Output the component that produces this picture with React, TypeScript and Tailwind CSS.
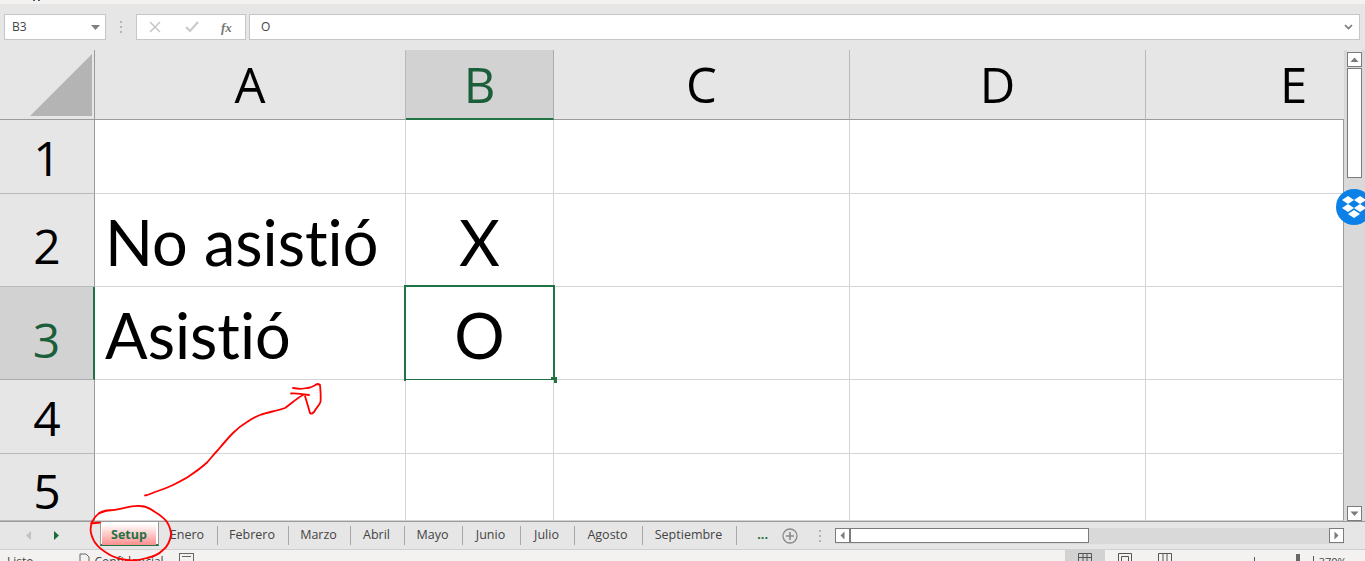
import React from "react";

const ui = "font-['Open_Sans','Liberation_Sans',sans-serif]";
const cellText = "font-['Lato','Liberation_Sans',sans-serif] text-[63px] leading-none text-black [font-variant-ligatures:none] bg-white pt-[2px]";

const columns = [
  { label: "A", w: "w-[311px]" },
  { label: "B", w: "w-[148px]", active: true },
  { label: "C", w: "w-[296px]" },
  { label: "D", w: "w-[296px]" },
  { label: "E", w: "w-[296px]" },
];

const rows = [
  { label: "1", h: "h-[74px]", pt: "pt-[2px]", a: "", b: "" },
  { label: "2", h: "h-[93px]", pt: "pt-[11px]", a: "No asistió", b: "X" },
  { label: "3", h: "h-[93px]", pt: "pt-[13px]", a: "Asistió", b: "O", active: true },
  { label: "4", h: "h-[74px]", pt: "pt-[2px]", a: "", b: "" },
  { label: "5", h: "h-[67px]", pt: "pt-[8px]", a: "", b: "" },
];

const tabs = [
  { t: "Enero", w: "w-[59px]" },
  { t: "Febrero", w: "w-[71px]" },
  { t: "Marzo", w: "w-[62px]" },
  { t: "Abril", w: "w-[54px]" },
  { t: "Mayo", w: "w-[58px]" },
  { t: "Junio", w: "w-[58px]" },
  { t: "Julio", w: "w-[54px]" },
  { t: "Agosto", w: "w-[68px]" },
  { t: "Septiembre", w: "w-[94px]" },
];

function Dots() {
  return (
    <div className="flex flex-col gap-[3px]">
      <span className="h-[2px] w-[2px] bg-[#b5b5b5]" />
      <span className="h-[2px] w-[2px] bg-[#b5b5b5]" />
      <span className="h-[2px] w-[2px] bg-[#b5b5b5]" />
    </div>
  );
}

function ScrollBtn({ points }: { points: string }) {
  return (
    <div className="flex h-[15px] w-[15px] shrink-0 items-center justify-center border border-[#7b7b7b] bg-white">
      <svg width="9" height="9" viewBox="0 0 9 9">
        <polygon points={points} fill="#7b7b7b" />
      </svg>
    </div>
  );
}

export default function App() {
  return (
    <div className={`relative flex h-[561px] w-[1365px] flex-col overflow-hidden bg-[#e6e6e6] ${ui}`}>
      {/* ribbon remnant */}
      <div className="flex h-[4px] shrink-0 items-start bg-[#f3f2f1] shadow-[0_1px_2px_rgba(0,0,0,0.25)]">
        <span className="ml-[33px] h-[1px] w-[2px] bg-[#555]" />
        <span className="ml-[3px] h-[1px] w-[2px] bg-[#555]" />
      </div>

      {/* formula bar */}
      <div className="flex h-[46px] shrink-0 items-start bg-[#e6e6e6] pl-[4px] pr-[5px] pt-[10px]">
        <div className="flex h-[26px] w-[102px] items-center justify-between border border-[#c6c6c6] bg-white pl-[7px] pr-[5px] text-[12px] text-[#444]">
          <span>B3</span>
          <svg width="9" height="5" viewBox="0 0 9 5">
            <polygon points="0,0 9,0 4.5,5" fill="#808080" />
          </svg>
        </div>
        <div className="flex h-[26px] w-[30px] items-center justify-center">
          <Dots />
        </div>
        <div className="flex h-[26px] w-[110px] items-center border border-[#c6c6c6] bg-white">
          <svg className="ml-[12px]" width="12" height="12" viewBox="0 0 12 12">
            <path d="M1 1 L11 11 M11 1 L1 11" stroke="#c8c8c8" strokeWidth="1.6" fill="none" />
          </svg>
          <svg className="ml-[24px]" width="14" height="12" viewBox="0 0 14 12">
            <path d="M1 6 L5 10 L13 1" stroke="#c8c8c8" strokeWidth="2" fill="none" />
          </svg>
          <span className="ml-[22px] font-['Liberation_Serif',serif] text-[13px] font-bold italic leading-none text-[#777]">fx</span>
        </div>
        <div className="ml-[3px] flex h-[26px] flex-1 items-center justify-between border border-[#c6c6c6] bg-white pl-[11px] pr-[6px] text-[12px] text-[#444]">
          <span>O</span>
          <svg width="9" height="6" viewBox="0 0 9 6">
            <path d="M1 1 L4.5 4.5 L8 1" stroke="#777" strokeWidth="1.6" fill="none" />
          </svg>
        </div>
      </div>

      {/* sheet + vertical scrollbar */}
      <div className="flex h-[471px] shrink-0">
        <div className="w-[1344px] shrink-0 overflow-hidden">
          {/* column header */}
          <div className="flex h-[70px]">
            <div className="flex w-[95px] shrink-0 items-end justify-end border-b border-r border-[#9b9b9b] pb-[3px] pr-[2px]">
              <svg width="62" height="62" viewBox="0 0 62 62">
                <polygon points="62,0 62,62 0,62" fill="#b4b4b4" />
              </svg>
            </div>
            {columns.map((c) => (
              <div
                key={c.label}
                className={`flex shrink-0 items-center justify-center border-r text-[49px] font-normal leading-none ${c.w} ${
                  c.active
                    ? "border-b-2 border-b-[#217346] border-r-[#ababab] bg-[#d2d2d2] text-[#1b5e3a]"
                    : "border-b border-b-[#9b9b9b] border-r-[#b9b9b9] text-black"
                }`}
              >
                {c.label}
              </div>
            ))}
          </div>
          {/* rows */}
          {rows.map((r) => (
            <div key={r.label} className={`flex ${r.h}`}>
              <div
                className={`flex w-[95px] shrink-0 items-center justify-center border-b text-[48px] leading-none ${r.pt} ${
                  r.active
                    ? "border-r-2 border-b-[#ababab] border-r-[#217346] bg-[#d2d2d2] text-[#1b5e3a]"
                    : "border-r border-b-[#b9b9b9] border-r-[#9b9b9b] text-black"
                }`}
              >
                {r.label}
              </div>
              <div className={`flex w-[311px] shrink-0 items-center border-b border-r border-[#d4d4d4] pl-[10px] ${cellText}`}>
                {r.a}
              </div>
              <div
                className={`relative flex w-[148px] shrink-0 items-center justify-center border-b border-r border-[#d4d4d4] ${cellText}`}
              >
                {r.b}
                {r.active && (
                  <div className="absolute left-[-2px] top-[-2px] h-[96px] w-[151px] border-2 border-[#217346]">
                    <span className="absolute bottom-[-4px] right-[-4px] h-[6px] w-[6px] bg-[#217346]" />
                  </div>
                )}
              </div>
              <div className="w-[296px] shrink-0 border-b border-r border-[#d4d4d4] bg-white" />
              <div className="w-[296px] shrink-0 border-b border-r border-[#d4d4d4] bg-white" />
              <div className="w-[198px] shrink-0 border-b border-r border-b-[#d4d4d4] border-r-[#9b9b9b] bg-white" />
            </div>
          ))}
        </div>
        <div className="flex w-[21px] shrink-0 flex-col items-center bg-[#d9d9d9] pl-[3px] pr-[3px]">
          <div className="h-[2px] w-full shrink-0 bg-[#e6e6e6]" />
          <ScrollBtn points="0.5,7 8.5,7 4.5,2.5" />
          <div className="mt-[1px] h-[110px] w-[15px] shrink-0 border border-[#7b7b7b] bg-white" />
          <div className="flex-1" />
          <ScrollBtn points="0.5,2.5 8.5,2.5 4.5,7" />
        </div>
      </div>

      {/* tab bar */}
      <div className="flex h-[28px] shrink-0 border-t border-[#9b9b9b] bg-[#e6e6e6] text-[12.5px] text-[#444]">
        <div className="flex w-[100px] shrink-0 items-center pl-[25px]">
          <svg width="7" height="9" viewBox="0 0 7 9">
            <polygon points="6,0 6,9 1,4.5" fill="#c2c2c2" />
          </svg>
          <svg className="ml-[21px]" width="7" height="9" viewBox="0 0 7 9">
            <polygon points="1,0 1,9 6,4.5" fill="#1b6b40" />
          </svg>
        </div>
        <div className="flex h-[24px] w-[59px] shrink-0 flex-col border-b-2 border-l border-r border-b-[#217346] border-l-[#9b9b9b] border-r-[#9b9b9b] bg-white pl-[1px] pr-[2px] pt-[2px]">
          <div className="flex flex-1 items-center justify-center bg-gradient-to-b from-white to-[#fa8f8f] pt-[2px] text-[12.5px] font-bold text-[#217346]">
            Setup
          </div>
        </div>
        {tabs.map((t) => (
          <div key={t.t} className={`flex shrink-0 items-center justify-center ${t.w}`}>
            <span className="flex h-[19px] w-full items-center justify-center border-r border-[#a8a8a8] pr-[2px] leading-none">{t.t}</span>
          </div>
        ))}
        <div className="flex w-[34px] shrink-0 items-center justify-end pr-[3px] font-bold text-[#1b6b40]">...</div>
        <div className="ml-[11px] flex shrink-0 items-center">
          <svg width="16" height="16" viewBox="0 0 16 16">
            <circle cx="8" cy="8" r="7" stroke="#8a8a8a" strokeWidth="1.3" fill="none" />
            <path d="M8 4 V12 M4 8 H12" stroke="#8a8a8a" strokeWidth="1.6" />
          </svg>
        </div>
        <div className="ml-[21px] flex shrink-0 items-center">
          <Dots />
        </div>
        <div className="ml-[14px] flex h-[16px] w-[509px] shrink-0 self-center bg-[#d9d9d9]">
          <ScrollBtn points="6.5,0.5 6.5,8.5 2.5,4.5" />
          <div className="h-[15px] w-[239px] shrink-0 border border-[#7b7b7b] bg-white" />
          <div className="flex-1" />
          <ScrollBtn points="2.5,0.5 2.5,8.5 6.5,4.5" />
        </div>
      </div>

      {/* status bar */}
      <div className="relative flex h-[12px] shrink-0 overflow-hidden border-t border-[#d0d0d0] bg-[#f3f2f1] text-[12px] text-[#444]">
        <span className="ml-[7px] mt-[6px] leading-none">Listo</span>
        <svg className="ml-[45px] mt-[3px]" width="11" height="13" viewBox="0 0 11 13">
          <path d="M1 1 H7 L10 4 V12 H1 Z" stroke="#666" fill="none" />
        </svg>
        <span className="ml-[5px] mt-[6px] leading-none">Confidencial</span>
        <svg className="ml-[15px] mt-[3px]" width="15" height="13" viewBox="0 0 15 13">
          <rect x="0.5" y="0.5" width="14" height="12" stroke="#666" fill="none" />
          <path d="M3 3.5 H12" stroke="#666" />
        </svg>
        <div className="ml-[871px] flex h-full w-[40px] justify-center bg-[#d2d2d2] pt-[3px]">
          <svg width="14" height="12" viewBox="0 0 14 12">
            <path d="M0.5 12 V0.5 H13.5 V12 M0.5 4.5 H13.5 M5 0.5 V12 M9 0.5 V12" stroke="#555" fill="none" />
          </svg>
        </div>
        <svg className="ml-[13px] mt-[3px]" width="14" height="12" viewBox="0 0 14 12">
          <path d="M0.5 12 V0.5 H13.5 V12 M3.5 12 V3.5 H10.5 V12" stroke="#555" fill="none" />
        </svg>
        <svg className="ml-[26px] mt-[3px]" width="14" height="12" viewBox="0 0 14 12">
          <path d="M0.5 12 V0.5 H13.5 V12 M5 0.5 V12 M9 0.5 V12" stroke="#555" fill="none" />
        </svg>
        <span className="ml-[82px] mt-[7px] h-[4px] w-[1px] bg-[#555]" />
        <span className="ml-[41px] mt-[4px] h-[7px] w-[4px] bg-[#666]" />
        <span className="ml-[13px] mt-[6px] h-[5px] w-[1px] bg-[#555]" />
        <span className="ml-[5px] mt-[6px] text-[11px] leading-none">370%</span>
      </div>

      {/* dropbox badge */}
      <div className="absolute left-[1336px] top-[189px] flex h-[36px] w-[36px] items-center justify-center rounded-full bg-[#0b80e6]">
        <svg width="26" height="24" viewBox="0 0 26 24">
          <path
            d="M7 1 L13 5 L7 9 L1 5 Z M19 1 L25 5 L19 9 L13 5 Z M7 9 L13 13 L7 17 L1 13 Z M19 9 L25 13 L19 17 L13 13 Z M13 15 L19 19 L13 23 L7 19 Z"
            fill="white"
          />
        </svg>
      </div>

      {/* handwritten annotations */}
      <svg className="pointer-events-none absolute left-0 top-0" width="1365" height="561" viewBox="0 0 1365 561" fill="none">
        <g stroke="#ff0000" strokeWidth="1.8" strokeLinecap="round" strokeLinejoin="round">
          <path d="M145 495.5 C149 495 152 493 155 492 C161 490 167 488 173 485 C179 482 185 479 190 475.5 C196 471.5 201 468 207 462.5 C211 458 214 454 218 450 C223 444 228 438 233 433 C237 429 242 425 247 422 C251 419 255 417 260 415 C268 412 277 411 285 408 C291 404 297 398 303 395" />
          <path d="M291 393.5 C296 393 303 394 309 395" />
          <path d="M305 396 L310 413 C311 414 313 413 314 412 C316 408 319 406 320.5 402 C321 397 320.5 390 320 385 C319 384 318 384 317 384 C314 386 310 388 307 388 C303 389 298 389 293 388" />
          <path d="M100 522.5 C97 523 94 523 91 523.5 M99 513 C103 511 108 510 113 510 C122 509 132 505 140 506 C147 506 151 509 155 512 C160 515 164 518 167 522 C170 527 171 531 171 535 C170 541 167 547 163 550 C158 555 152 557 147 558 C140 560 133 561 127 560 C120 559 115 558 110 555 C105 552 100 549 97 545 C93 541 92 537 91 533 C90 529 91 525 92 522 C94 518 96 515 100 513 C104 511 109 510 113 510" />
        </g>
      </svg>
    </div>
  );
}
